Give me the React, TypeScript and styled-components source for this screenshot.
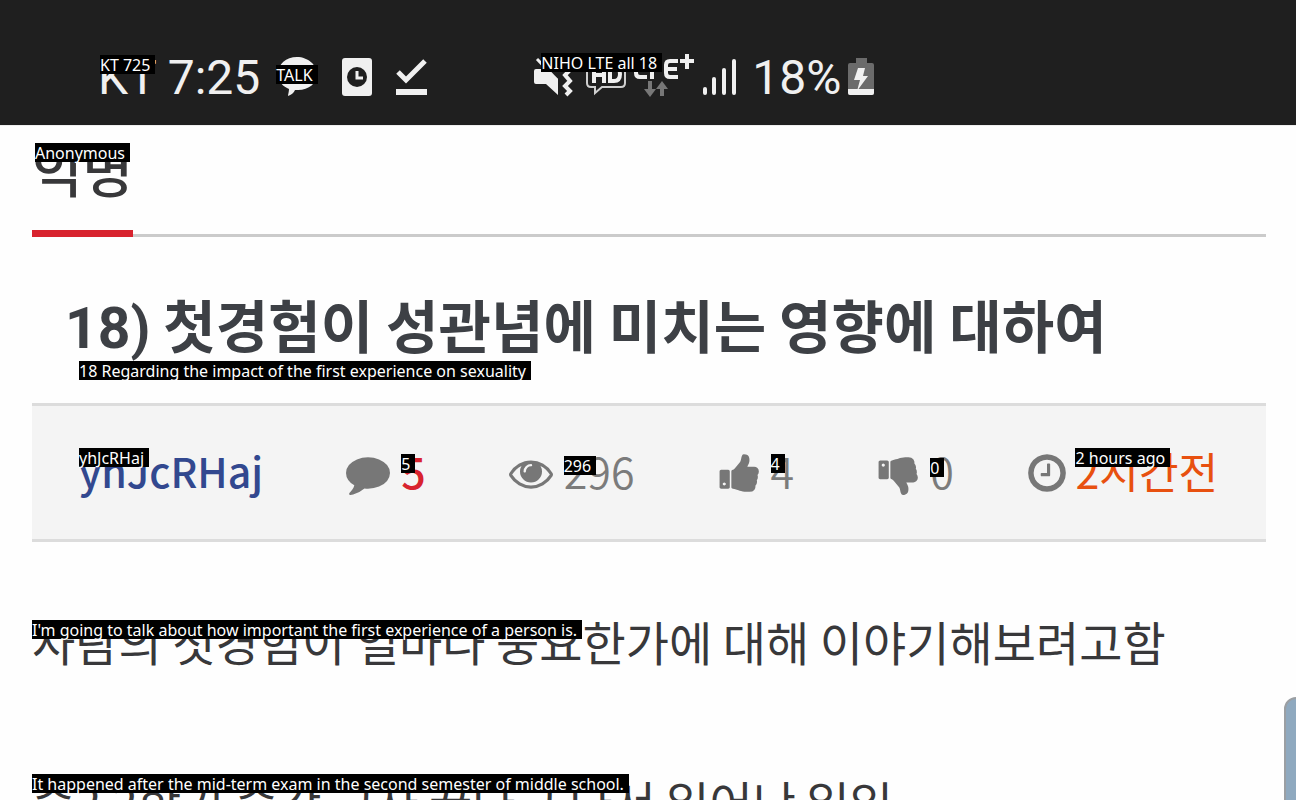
import React from "react";
import styled, { createGlobalStyle } from "styled-components";

const GlobalStyle = createGlobalStyle`
  * { box-sizing: border-box; }
  body {
    margin: 0;
    background: #fefefe;
    color: #38383a;
    font-family: "Noto Sans CJK KR", "Noto Sans", sans-serif;
  }
  h1, p { margin: 0; }
`;

const Screen = styled.div`
  position: relative;
  height: 100vh;
  overflow: hidden;
`;

const StatusBar = styled.header`
  display: flex;
  align-items: flex-start;
  height: 125px;
  padding: 48px 98px 0;
  background: #1f1f1f;
  box-shadow: 0 1px #eee;
  color: #f0f0f0;
  font: 48px/60px Roboto, sans-serif;
`;

const StatusGroup = styled.div<{ $gap: number }>`
  display: flex;
  align-items: center;
  gap: ${(p) => p.$gap}px;
  height: 60px;

  svg {
    display: block;
    flex: none;
    margin-bottom: 2px;
  }
`;

const RightGroup = styled(StatusGroup)`
  margin-left: 106px;
`;

const Anchor = styled.span`
  position: relative;
  display: inline-flex;
`;

const Caption = styled.span<{ $top: number; $left?: number }>`
  position: absolute;
  z-index: 1;
  top: ${(p) => p.$top}px;
  left: ${(p) => p.$left ?? 0}px;
  height: 19px;
  padding-right: 5px;
  background: #000;
  color: #fff;
  font: 400 16px/20px "Noto Sans", sans-serif;
  white-space: nowrap;
`;

const Board = styled.nav`
  display: flex;
  height: 112px;
  margin: 0 30px 0 32px;
  border-bottom: 3px solid #cbcbcb;
`;

const BoardTab = styled.a`
  position: relative;
  height: 112px;
  padding-top: 5px;
  border-bottom: 7px solid #d8232e;
  color: #38383a;
  font-size: 55px;
  font-weight: 500;
  line-height: 76px;
  text-decoration: none;
`;

const Title = styled.h1`
  position: relative;
  margin: 0 30px 0 65px;
  padding: 44px 0 38px;
  color: #3d4045;
  font-size: 57px;
  font-weight: 700;
  line-height: 84px;
  white-space: nowrap;
`;

const TitleNumber = styled.span`
  font-family: Roboto, sans-serif;
  line-height: 1;
`;

const Meta = styled.section`
  display: flex;
  align-items: center;
  justify-content: space-between;
  height: 139px;
  margin: 0 30px 0 32px;
  padding: 0 48px 0 47px;
  border-top: 3px solid #dcdcdc;
  border-bottom: 3px solid #dcdcdc;
  background: #f4f4f4;
  font-size: 43px;
  line-height: 58px;
  white-space: nowrap;
`;

const Stats = styled.div`
  display: flex;
  align-items: center;
  gap: 83px;
`;

const Author = styled.a`
  position: relative;
  padding-bottom: 6px;
  color: #32488f;
  font-size: 41px;
  font-weight: 500;
  text-decoration: none;
`;

const Stat = styled.span<{ $color?: string; $weight?: number }>`
  display: inline-flex;
  align-items: center;
  gap: 11px;
  color: ${(p) => p.$color ?? "#7b7b7b"};
  font-weight: ${(p) => p.$weight ?? 350};
`;

const Posted = styled(Stat)`
  gap: 6px;
`;

const Value = styled(Anchor)`
  padding-bottom: 6px;
`;

const Vote = styled.button`
  display: inline-flex;
  align-items: center;
  gap: 9px;
  padding: 0;
  border: 0;
  background: none;
  color: #7b7b7b;
  font: inherit;
  font-weight: 350;
`;

const Glyph = styled.svg`
  display: block;
  flex: none;
  width: 44px;
  height: 44px;
  fill: #777;
`;

const Body = styled.article`
  padding: 59px 30px 0 32px;
  font-size: 47px;
  line-height: 80px;
  white-space: nowrap;
`;

const Line = styled.p`
  position: relative;
  margin-bottom: 80px;
`;

const ScrollHandle = styled.div`
  position: absolute;
  right: -8px;
  bottom: -20px;
  width: 20px;
  height: 123px;
  border: 2px solid #9b9fa3;
  border-radius: 12px 0 0 12px;
  background: #8fa9bf;
`;

const paths = {
  comment:
    "M1792 896q0 174-120 321.5t-326 233-450 85.5q-70 0-145-8-198 175-460 242-49 14-114 22h-5q-15 0-27-10.5t-16-27.5v-1q-3-4-.5-12t2-10 4.5-9.5l6-9 7-8.5 8-9q7-8 31-34.5t34.5-38 31-39.5 32.5-51 27-59 26-76q-157-89-247.5-220t-90.5-281q0-174 120-321.5t326-233 450-85.5 450 85.5 326 233 120 321.5z",
  eye: "M1664 960q-152-236-381-353 61 104 61 225 0 185-131.5 316.5t-316.5 131.5-316.5-131.5-131.5-316.5q0-121 61-225-229 117-381 353 133 205 333.5 326.5t434.5 121.5 434.5-121.5 333.5-326.5zm-720-384q0-20-14-34t-34-14q-125 0-214.5 89.5t-89.5 214.5q0 20 14 34t34 14 34-14 14-34q0-86 61-147t147-61q20 0 34-14t14-34zm848 384q0 34-20 69-140 230-376.5 368.5t-499.5 138.5-499.5-139-376.5-368q-20-35-20-69t20-69q140-229 376.5-368t499.5-139 499.5 139 376.5 368q20 35 20 69z",
  up: "M320 1344q0-26-19-45t-45-19q-27 0-45.5 19t-18.5 45q0 27 18.5 45.5t45.5 18.5q26 0 45-18.5t19-45.5zm160-512v640q0 26-19 45t-45 19h-288q-26 0-45-19t-19-45v-640q0-26 19-45t45-19h288q26 0 45 19t19 45zm1184 0q0 86-55 149 15 44 15 76 3 76-43 137 17 56 0 117-15 57-54 94 9 112-49 181-64 76-197 78h-129q-66 0-144-15.5t-121.5-29-120.5-39.5q-123-43-158-44-26-1-45-19.5t-19-44.5v-641q0-25 18-43.5t43-20.5q24-2 76-59t101-121q68-87 101-120 18-18 31-48t17.5-48.5 13.5-60.5q7-39 12.5-61t19.5-52 34-50q19-19 45-19 46 0 82.5 10.5t60 26 40 40.5 24 45 12 50 5 45 .5 39q0 38-9.5 76t-19 60-27.5 56q-3 6-10 18t-11 22-8 24h277q78 0 135 57t57 135z",
  down: "M320 576q0 26-19 45t-45 19q-27 0-45.5-19t-18.5-45q0-27 18.5-45.5t45.5-18.5q26 0 45 18.5t19 45.5zm160 512v-640q0-26-19-45t-45-19h-288q-26 0-45 19t-19 45v640q0 26 19 45t45 19h288q26 0 45-19t19-45zm1129-149q55 61 55 149-1 78-57.5 135t-134.5 57h-277q4 14 8 24t11 22 10 18q18 37 27 57t19 58.5 10 76.5q0 24-.5 39t-5 45-12 50-24 45-40 40.5-60 26-82.5 10.5q-26 0-45-19-20-20-34-50t-19.5-52-12.5-61q-9-42-13.5-60.5t-17.5-48.5-31-48q-33-33-101-120-49-64-101-121t-76-59q-25-2-43-20.5t-18-43.5v-641q0-26 19-44.5t45-19.5q35-1 158-44 77-26 120.5-39.5t121.5-29 144-15.5h129q133 2 197 78 58 69 49 181 39 37 54 94 17 61 0 117 46 61 43 137 0 32-15 76z",
  clock:
    "M1024 544v448q0 14-9 23t-23 9h-320q-14 0-23-9t-9-23v-64q0-14 9-23t23-9h224v-352q0-14 9-23t23-9h64q14 0 23 9t9 23zm416 352q0-148-73-273t-198-198-273-73-273 73-198 198-73 273 73 273 198 198 273 73 273-73 198-198 73-273zm224 0q0 209-103 385.5t-279.5 279.5-385.5 103-385.5-103-279.5-279.5-103-385.5 103-385.5 279.5-279.5 385.5-103 385.5 103 279.5 279.5 103 385.5z",
};

const Icon = ({ name }: { name: keyof typeof paths }) => (
  <Glyph viewBox="0 0 1792 1792" aria-hidden="true">
    <path d={paths[name]} />
  </Glyph>
);

const TalkIcon = () => (
  <svg width="42" height="42" viewBox="0 0 42 42" fill="#f0f0f0" aria-hidden="true">
    <path d="M21 1C10 1 2 8 2 18c0 6 3 11 9 14l2 1c0 3-1 5-1 7 3-1 6-3 7-6h3c11 0 19-7 19-16S32 1 21 1z" />
  </svg>
);

const ClockCardIcon = () => (
  <svg width="30" height="38" viewBox="0 0 30 38" aria-hidden="true">
    <rect width="30" height="38" rx="3" fill="#f0f0f0" />
    <circle cx="15" cy="19" r="10" fill="#1f1f1f" />
    <path d="M15 13v7h6" fill="none" stroke="#f0f0f0" strokeWidth="3" />
  </svg>
);

const CheckIcon = () => (
  <svg width="32" height="38" viewBox="0 0 32 38" aria-hidden="true">
    <path d="M2 14l8 8L29 3" fill="none" stroke="#f0f0f0" strokeWidth="5" />
    <rect y="31" width="31" height="6" fill="#f0f0f0" />
  </svg>
);

const MuteIcon = () => (
  <svg width="44" height="42" viewBox="0 0 44 42" aria-hidden="true">
    <path d="M2 13h9L24 23v16L12 28H2q-2 0-2-2V15q0-2 2-2z" fill="#f0f0f0" />
    <path d="M3 3l20 21" stroke="#f0f0f0" strokeWidth="3" />
    <path d="M36 14l-5 5 5 6-5 5 5 5-4 4" fill="none" stroke="#f0f0f0" strokeWidth="4" />
  </svg>
);

const HdIcon = () => (
  <svg width="40" height="42" viewBox="0 0 40 42" fill="none" stroke="#f0f0f0" aria-hidden="true">
    <path d="M5 7h30q4 0 4 4v16q0 4-4 4H16l-7 6v-6H5q-4 0-4-4V11q0-4 4-4z" strokeWidth="2" stroke="#cfcfcf" />
    <path d="M8 11v16M18 11v16M8 19h10M24 12v13h4q6 0 6-7t-6-6z" strokeWidth="4" />
  </svg>
);

const LteIcon = () => (
  <svg width="61" height="48" viewBox="0 0 61 48" fill="none" stroke="#f0f0f0" strokeWidth="4" aria-hidden="true">
    <path d="M2 6v14q0 4 4 4h7M11 8h13M18 8v18M44 8h-8q-4 0-4 4v8q0 4 4 4h8M32 16h11" />
    <path d="M53 1v15M46 8h14" strokeWidth="4" />
    <g fill="#777" stroke="none">
      <path d="M14 28h4v8h4l-6 8-6-8h4z" />
      <path d="M26 43h4v-7h4l-6-8-6 8h4z" />
    </g>
  </svg>
);

const SignalIcon = () => (
  <svg width="34" height="38" viewBox="0 0 34 38" fill="#f0f0f0" aria-hidden="true">
    <rect y="29" width="4" height="8" rx="2" />
    <rect x="9" y="19" width="4" height="18" rx="2" />
    <rect x="19" y="10" width="4" height="27" rx="2" />
    <rect x="29" y="1" width="4" height="36" rx="2" />
  </svg>
);

const BatteryIcon = () => (
  <svg width="26" height="40" viewBox="0 0 26 40" aria-hidden="true">
    <path d="M8 1h11v5h5q2 0 2 2v28q0 2-2 2H2q-2 0-2-2V8q0-2 2-2h6z" fill="#6b6b6b" />
    <path d="M0 32h26v4q0 2-2 2H2q-2 0-2-2z" fill="#f0f0f0" />
    <path d="M10 11h7l-2 8h5L9 34l3-11H6z" fill="#f0f0f0" />
  </svg>
);

export default function App() {
  return (
    <Screen>
      <GlobalStyle />
      <StatusBar>
        <StatusGroup $gap={16}>
          <StatusGroup $gap={11}>
            <Anchor>
              KT
              <Caption $top={7} $left={2}>KT 725</Caption>
            </Anchor>
            <span>7:25</span>
          </StatusGroup>
          <StatusGroup $gap={24}>
            <Anchor>
              <TalkIcon />
              <Caption $top={9}>TALK</Caption>
            </Anchor>
            <ClockCardIcon />
            <CheckIcon />
          </StatusGroup>
        </StatusGroup>
        <RightGroup $gap={15}>
          <StatusGroup $gap={8}>
            <Anchor>
              <MuteIcon />
              <Caption $top={-3} $left={7}>NIHO LTE all 18</Caption>
            </Anchor>
            <HdIcon />
            <LteIcon />
            <SignalIcon />
          </StatusGroup>
          <StatusGroup $gap={7}>
            <span>18%</span>
            <BatteryIcon />
          </StatusGroup>
        </RightGroup>
      </StatusBar>
      <Board>
        <BoardTab href="#anonymous">
          익명
          <Caption $top={18} $left={3}>Anonymous</Caption>
        </BoardTab>
      </Board>
      <main>
        <Title>
          <TitleNumber>18)</TitleNumber> 첫경험이 성관념에 미치는 영향에 대하여
          <Caption $top={124} $left={14}>
            18 Regarding the impact of the first experience on sexuality
          </Caption>
        </Title>
        <Meta>
          <Stats>
            <Author href="#author">
              yhJcRHaj
              <Caption $top={7}>yhJcRHaj</Caption>
            </Author>
            <Stat $color="#d8232e" $weight={500}>
              <Icon name="comment" />
              <Value>
                5<Caption $top={13}>5</Caption>
              </Value>
            </Stat>
            <Stat>
              <Icon name="eye" />
              <Value>
                296<Caption $top={15}>296</Caption>
              </Value>
            </Stat>
            <Vote type="button">
              <Icon name="up" />
              <Value>
                4<Caption $top={13}>4</Caption>
              </Value>
            </Vote>
            <Vote type="button">
              <Icon name="down" />
              <Value>
                0<Caption $top={17}>0</Caption>
              </Value>
            </Vote>
          </Stats>
          <Posted $color="#e8500f" $weight={400}>
            <Icon name="clock" />
            <Value>
              2시간전<Caption $top={7}>2 hours ago</Caption>
            </Value>
          </Posted>
        </Meta>
        <Body>
          <Line>
            사람의 첫경험이 얼마나 중요한가에 대해 이야기해보려고함
            <Caption $top={19}>
              I'm going to talk about how important the first experience of a person is.
            </Caption>
          </Line>
          <Line>
            중2 2학기 중간 고사 끝나고 나서 일어난 일임
            <Caption $top={13}>
              It happened after the mid-term exam in the second semester of middle school.
            </Caption>
          </Line>
        </Body>
      </main>
      <ScrollHandle />
    </Screen>
  );
}
